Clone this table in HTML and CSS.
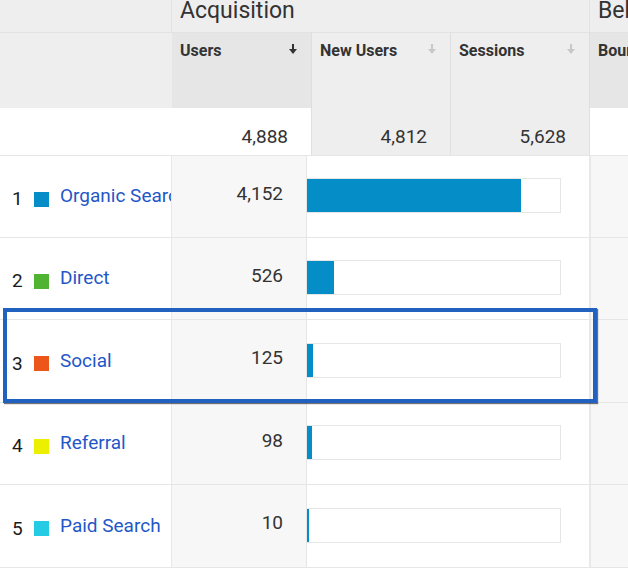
FILE: index.html
```html
<!DOCTYPE html>
<html>
<head>
<meta charset="utf-8">
<link rel="stylesheet" href="styles.css">
</head>
<body>
<div class="report">
  <div class="group-row">
    <div class="g-cell g-blank"></div>
    <div class="g-cell g-title">Acquisition</div>
    <div class="g-cell g-title g-last">Behavior</div>
  </div>
  <div class="head-row">
    <div class="h-cell h-blank"></div>
    <div class="h-cell h-sorted"><span>Users</span><svg class="arrow" width="8" height="10" viewBox="0 0 8 10"><rect x="3" y="0" width="2" height="5" fill="#333"/><polygon points="0,5 8,5 4,10" fill="#333"/></svg></div>
    <div class="h-cell"><span>New Users</span><svg class="arrow" width="8" height="10" viewBox="0 0 8 10"><rect x="3" y="0" width="2" height="5" fill="#c8c8c8"/><polygon points="0,5 8,5 4,10" fill="#c8c8c8"/></svg></div>
    <div class="h-cell"><span>Sessions</span><svg class="arrow" width="8" height="10" viewBox="0 0 8 10"><rect x="3" y="0" width="2" height="5" fill="#c8c8c8"/><polygon points="0,5 8,5 4,10" fill="#c8c8c8"/></svg></div>
    <div class="h-cell h-sorted h-last"><span>Bounce Rate</span></div>
  </div>
  <div class="totals-row">
    <div class="t-cell t-blank"></div>
    <div class="t-cell t-white">4,888</div>
    <div class="t-cell">4,812</div>
    <div class="t-cell">5,628</div>
    <div class="t-cell t-white t-last"></div>
  </div>

  <div class="data-row">
    <div class="d-name"><span class="rank">1</span><span class="sq" style="background:#058dc7"></span><a class="link">Organic Search</a></div>
    <div class="d-val">4,152</div>
    <div class="d-bar"><div class="track"><div class="fill" style="width:214px"></div></div></div>
    <div class="d-rest"></div>
  </div>
  <div class="data-row">
    <div class="d-name"><span class="rank">2</span><span class="sq" style="background:#50b432"></span><a class="link">Direct</a></div>
    <div class="d-val">526</div>
    <div class="d-bar"><div class="track"><div class="fill" style="width:27px"></div></div></div>
    <div class="d-rest"></div>
  </div>
  <div class="data-row tall">
    <div class="d-name"><span class="rank">3</span><span class="sq" style="background:#ed561b"></span><a class="link">Social</a></div>
    <div class="d-val">125</div>
    <div class="d-bar"><div class="track"><div class="fill" style="width:6px"></div></div></div>
    <div class="d-rest"></div>
  </div>
  <div class="data-row">
    <div class="d-name"><span class="rank">4</span><span class="sq" style="background:#edef00"></span><a class="link">Referral</a></div>
    <div class="d-val">98</div>
    <div class="d-bar"><div class="track"><div class="fill" style="width:5px"></div></div></div>
    <div class="d-rest"></div>
  </div>
  <div class="data-row tall">
    <div class="d-name"><span class="rank">5</span><span class="sq" style="background:#24cbe5"></span><a class="link">Paid Search</a></div>
    <div class="d-val">10</div>
    <div class="d-bar"><div class="track"><div class="fill" style="width:2px"></div></div></div>
    <div class="d-rest"></div>
  </div>

  <div class="highlight"></div>
</div>
</body>
</html>
```

FILE: styles.css
```css
html, body {
  margin: 0;
  padding: 0;
  background: #fff;
  overflow: hidden;
}
body {
  font-family: Roboto, "Liberation Sans", Arial, sans-serif;
  color: #333;
}
.report {
  position: relative;
  width: 628px;
}

/* group row */
.group-row {
  display: grid;
  grid-template-columns: 172px 418px 1fr;
  height: 33px;
  background: #eeeeee;
  border-bottom: 1px solid #e2e2e2;
  box-sizing: border-box;
}
.g-cell {
  border-right: 1px solid #e2e2e2;
  overflow: hidden;
  white-space: nowrap;
}
.g-last { border-right: none; }
.g-title {
  font-size: 23px;
  line-height: 24px;
  padding-left: 8px;
  margin-top: -1px;
  color: #333;
}

/* column header row */
.head-row {
  display: grid;
  grid-template-columns: 172px 140px 139px 139px 1fr;
  height: 75px;
  background: #eeeeee;
}
.h-cell {
  display: flex;
  justify-content: space-between;
  align-items: flex-start;
  padding: 8px 14px 0 8px;
  border-right: 1px solid #dedede;
  font-size: 16px;
  font-weight: 700;
  line-height: 19px;
  white-space: nowrap;
  overflow: hidden;
  color: #333;
}
.h-blank { border-right: none; }
.h-sorted { background: #e6e6e6; }
.h-last { border-right: none; }
.arrow { margin-top: 3px; flex: none; }

/* totals row */
.totals-row {
  display: grid;
  grid-template-columns: 172px 140px 139px 139px 1fr;
  height: 48px;
  border-bottom: 1px solid #e6e6e6;
  box-sizing: border-box;
}
.t-cell {
  background: #eeeeee;
  border-right: 1px solid #e0e0e0;
  text-align: right;
  padding: 18px 23px 0 0;
  font-size: 19px;
  line-height: 22px;
  color: #333;
}
.t-blank { background: #fff; border-right: none; }
.t-white { background: #fff; }
.t-last { border-right: none; }

/* data rows */
.data-row {
  display: grid;
  grid-template-columns: 172px 135px 284px 1fr;
  height: 82px;
  border-bottom: 1px solid #e6e6e6;
  box-sizing: border-box;
}
.data-row.tall { height: 83px; }
.d-name {
  display: flex;
  align-items: center;
  padding-left: 12px;
  border-right: 1px solid #e8e8e8;
  white-space: nowrap;
  overflow: hidden;
  font-size: 19px;
  line-height: 22px;
}
.rank {
  width: 22px;
  flex: none;
  color: #1a1a1a;
  margin-top: 5px;
}
.sq {
  width: 15px;
  height: 15px;
  flex: none;
  margin-right: 11px;
  margin-top: 5px;
}
.link {
  color: #1f57c8;
  text-decoration: none;
  margin-top: -1px;
}
.d-val {
  background: #f7f7f7;
  border-right: 1px solid #e6e6e6;
  text-align: right;
  padding-right: 23px;
  font-size: 19px;
  line-height: 22px;
  display: flex;
  align-items: center;
  justify-content: flex-end;
  padding-bottom: 6px;
  box-sizing: border-box;
}
.d-bar {
  display: flex;
  align-items: center;
  border-right: 2px solid #e8e8e8;
  padding-bottom: 2px;
  box-sizing: border-box;
}
.track {
  width: 254px;
  height: 35px;
  border: 1px solid #e6e6e6;
  border-left: none;
  box-sizing: border-box;
  display: flex;
}
.fill {
  background: #058dc7;
  height: 33px;
}
.d-rest {
  background: #f7f7f7;
}

/* highlight overlay */
.highlight {
  position: absolute;
  left: 3px;
  top: 308px;
  width: 594px;
  height: 95px;
  border: 4px solid #2161c0;
  box-sizing: border-box;
  box-shadow: 1px 1px 1px rgba(0, 0, 0, 0.55);
}
```
